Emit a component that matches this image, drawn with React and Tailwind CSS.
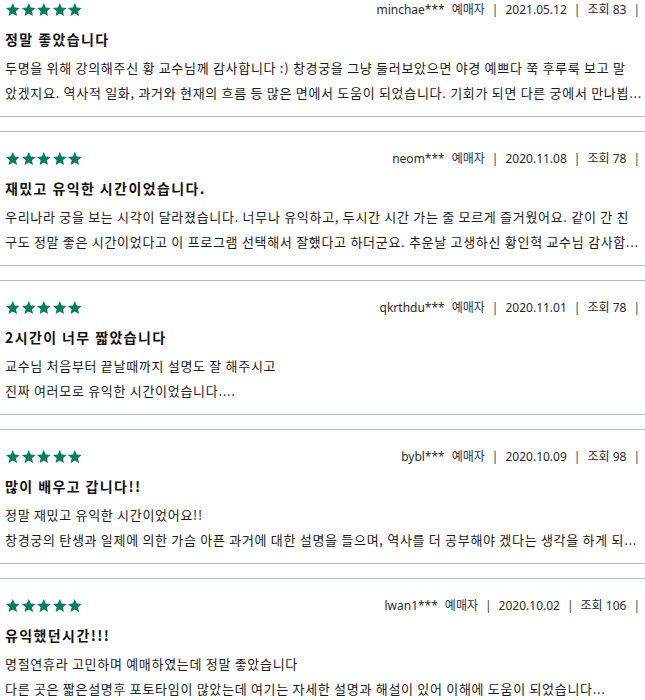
import React from "react";

const reviews = [
  {
    user: "minchae***",
    date: "2021.05.12",
    views: 83,
    title: "정말 좋았습니다",
    lines: [
      "두명을 위해 강의해주신 황 교수님께 감사합니다 :) 창경궁을 그냥 둘러보았으면 야경 예쁘다 쭉 후루룩 보고 말",
      "았겠지요. 역사적 일화, 과거와 현재의 흐름 등 많은 면에서 도움이 되었습니다. 기회가 되면 다른 궁에서 만나뵙...",
    ],
  },
  {
    user: "neom***",
    date: "2020.11.08",
    views: 78,
    title: "재밌고 유익한 시간이었습니다.",
    lines: [
      "우리나라 궁을 보는 시각이 달라졌습니다. 너무나 유익하고, 두시간 시간 가는 줄 모르게 즐거웠어요. 같이 간 친",
      "구도 정말 좋은 시간이었다고 이 프로그램 선택해서 잘했다고 하더군요. 추운날 고생하신 황인혁 교수님 감사합...",
    ],
  },
  {
    user: "qkrthdu***",
    date: "2020.11.01",
    views: 78,
    title: "2시간이 너무 짧았습니다",
    lines: ["교수님 처음부터 끝날때까지 설명도 잘 해주시고", "진짜 여러모로 유익한 시간이었습니다...."],
  },
  {
    user: "bybl***",
    date: "2020.10.09",
    views: 98,
    title: "많이 배우고 갑니다!!",
    lines: [
      "정말 재밌고 유익한 시간이었어요!!",
      "창경궁의 탄생과 일제에 의한 가슴 아픈 과거에 대한 설명을 들으며, 역사를 더 공부해야 겠다는 생각을 하게 되...",
    ],
  },
  {
    user: "lwan1***",
    date: "2020.10.02",
    views: 106,
    title: "유익했던시간!!!",
    lines: [
      "명절연휴라 고민하며 예매하였는데 정말 좋았습니다",
      "다른 곳은 짧은설명후 포토타임이 많았는데 여기는 자세한 설명과 해설이 있어 이해에 도움이 되었습니다...",
    ],
  },
];

function Star() {
  return (
    <svg viewBox="0 0 24 24" className="w-[15.6px] h-[15px]" fill="#0a7d5a">
      <path d="M12 1.5l3.09 7.26 7.91.69-6 5.2 1.8 7.75L12 18.3l-6.8 4.1 1.8-7.75-6-5.2 7.91-.69z" />
    </svg>
  );
}

function Review({ r }) {
  return (
    <div className="mb-[14px]">
      <div className="border-t border-[#aebacb]" />
      <div className="px-[5px] pt-[19px] pb-[11px]">
        <div className="flex items-center justify-between h-[15px]">
          <div className="flex">
            <Star />
            <Star />
            <Star />
            <Star />
            <Star />
          </div>
          <div className="flex items-center gap-[7px] text-[12px] text-[#2b2b2b] font-['Noto_Sans','Noto_Sans_CJK_KR',sans-serif]">
            <span>{r.user}</span>
            <span className="text-[#223344]">예매자</span>
            <span className="text-[#444]">|</span>
            <span>{r.date}</span>
            <span className="text-[#444]">|</span>
            <span>조회 {r.views}</span>
            <span className="text-[#444]">|</span>
          </div>
        </div>
        <div className="mt-[12px] leading-[20px] text-[14px] font-bold text-[#111] tracking-[1.4px]">
          {r.title}
        </div>
        <div className="mt-[6px] h-[50px] leading-[25px] text-[13px] text-[#1a1a1a] tracking-[0.7px]">
          {r.lines.map((l, i) => (
            <div key={i} className="whitespace-nowrap">
              {l}
            </div>
          ))}
        </div>
      </div>
      <div className="border-t border-[#aebacb]" />
    </div>
  );
}

export default function App() {
  return (
    <div className="w-[645px] h-[700px] overflow-hidden bg-white font-['Noto_Sans_CJK_KR','Noto_Sans',sans-serif]">
      <div className="mt-[-18px]">
        {reviews.map((r, i) => (
          <Review key={i} r={r} />
        ))}
      </div>
    </div>
  );
}
